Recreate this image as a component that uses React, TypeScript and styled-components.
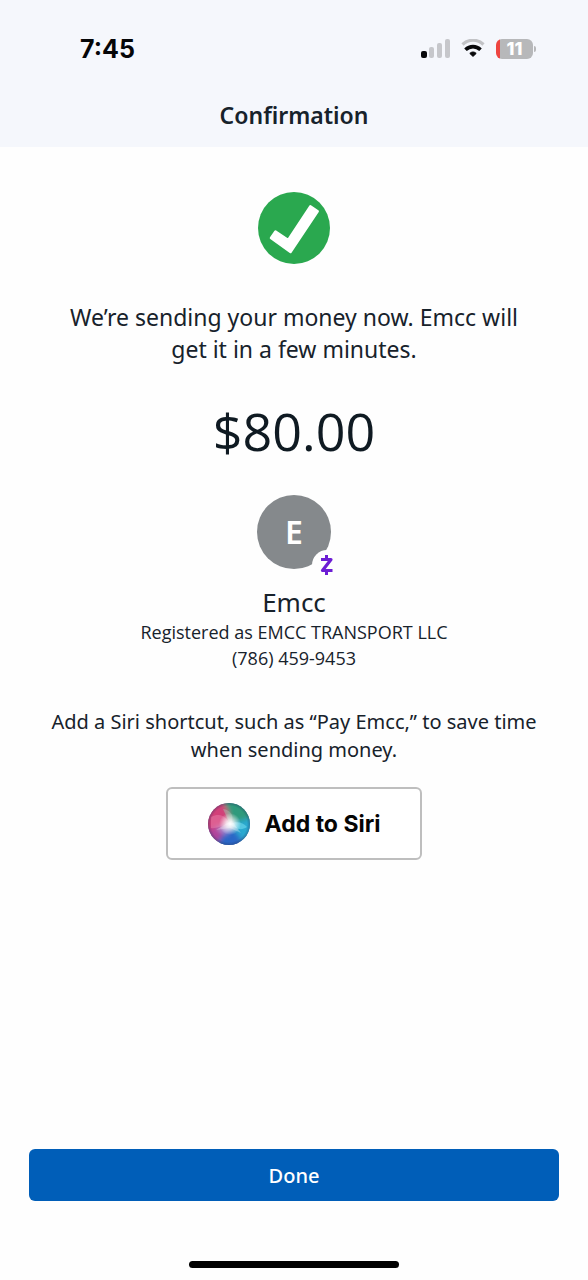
import React from "react";
import styled, { createGlobalStyle } from "styled-components";

const GlobalStyle = createGlobalStyle`
  *, *::before, *::after { box-sizing: border-box; }
  body {
    margin: 0;
    background: #fefefe;
    color: #17222b;
    font-family: "Noto Sans", "Open Sans", sans-serif;
  }
  h1, p { margin: 0; font-weight: 400; }
  button { font: inherit; cursor: pointer; }
`;

const Screen = styled.div`
  display: flex;
  flex-direction: column;
  min-height: 100vh;
`;

const Header = styled.header`
  background: #f5f7fc;
  padding-bottom: 14px;
`;

const StatusBar = styled.div`
  display: flex;
  align-items: center;
  justify-content: space-between;
  height: 97px;
  padding: 0 52px 0 80px;
`;

const Clock = styled.time`
  color: #050608;
  font: 700 25px/32px Inter, sans-serif;
`;

const StatusIcons = styled.div`
  display: flex;
  align-items: center;
  gap: 11px;
`;

const Battery = styled.div`
  display: flex;
  align-items: center;
  gap: 1px;
`;

const BatteryBody = styled.div`
  display: flex;
  align-items: center;
  justify-content: center;
  width: 37px;
  height: 20px;
  border-radius: 6px;
  background: linear-gradient(to right, #ee4540 4px, #b7b8ba 4px);
  color: #ffffff;
  font: 800 18px/20px Inter, sans-serif;
`;

const BatteryTip = styled.span`
  width: 2px;
  height: 6px;
  border-radius: 0 3px 3px 0;
  background: #b7b8ba;
`;

const Title = styled.h1`
  && { font-weight: 600; }
  font-size: 23px;
  line-height: 36px;
  text-align: center;
`;

const Content = styled.main`
  display: flex;
  flex-direction: column;
  align-items: center;
  padding: 45px 40px 32px;
  text-align: center;
`;

const Message = styled.p`
  max-width: 480px;
  margin-top: 37px;
  font-size: 23px;
  line-height: 32px;
`;

const Amount = styled.p`
  margin-top: 34px;
  color: #0f1a22;
  font-family: "Open Sans", sans-serif;
  font-size: 52px;
  line-height: 64px;
`;

const Avatar = styled.div`
  position: relative;
  display: flex;
  align-items: center;
  justify-content: center;
  width: 74px;
  height: 74px;
  margin-top: 32px;
  border-radius: 50%;
  background: #85898c;
  color: #ffffff;
  font-size: 32px;
  font-weight: 600;
  line-height: 40px;
`;

const ZelleBadge = styled.span`
  position: absolute;
  right: -11px;
  bottom: -11px;
  display: flex;
  align-items: center;
  justify-content: center;
  width: 30px;
  height: 30px;
  border-radius: 50%;
  background: #fefefe;
`;

const Name = styled.p`
  margin-top: 16px;
  font-size: 26px;
  line-height: 34px;
`;

const Detail = styled.p`
  font-family: "Open Sans", sans-serif;
  font-size: 18px;
  line-height: 26px;
`;

const Hint = styled.p`
  margin-top: 37px;
  font-size: 20px;
  line-height: 28px;
`;

const SiriButton = styled.button`
  display: flex;
  align-items: center;
  justify-content: center;
  gap: 15px;
  width: 256px;
  height: 73px;
  margin-top: 23px;
  border: 2px solid #bebebe;
  border-radius: 6px;
  background: #ffffff;
  color: #050505;
  && { font: 700 23px/28px Inter, sans-serif; }
`;

const Footer = styled.footer`
  display: flex;
  flex-direction: column;
  align-items: center;
  gap: 60px;
  margin-top: auto;
  padding: 0 29px 12px;
`;

const DoneButton = styled.button`
  width: 100%;
  height: 52px;
  border: 0;
  border-radius: 6px;
  background: #005eb8;
  color: #ffffff;
  && { font-size: 20px; font-weight: 500; }
`;

const HomeIndicator = styled.div`
  width: 210px;
  height: 7px;
  border-radius: 4px;
  background: #000000;
`;

const SignalIcon = () => (
  <svg width="30" height="20" viewBox="0 0 30 20" aria-hidden="true">
    <rect x="1" y="12" width="6" height="7" rx="2" fill="#08090b" />
    <rect x="9" y="8" width="5" height="11" rx="2" fill="#c6c7cb" />
    <rect x="17" y="4" width="5" height="15" rx="2" fill="#c6c7cb" />
    <rect x="25" y="0" width="5" height="19" rx="2" fill="#c6c7cb" />
  </svg>
);

const WifiIcon = () => (
  <svg width="24" height="20" viewBox="0 0 24 20" fill="none" aria-hidden="true">
    <path d="M1.5 5.5C7.400-.2 16.600-.2 22.500 5.500" stroke="#c2c3c6" strokeWidth="3.200" />
    <path d="M4.500 10.800C8.800 6.500 15.200 6.500 19.500 10.800" stroke="#08090b" strokeWidth="3.600" />
    <path d="M8.800 14.400c2-1.900 4.400-1.900 6.400 0L12 17.400Z" fill="#08090b" stroke="#08090b" strokeLinejoin="round" />
  </svg>
);

const SuccessIcon = () => (
  <svg width="72" height="72" viewBox="0 0 72 72" role="img" aria-label="Success">
    <circle cx="36" cy="36" r="36" fill="#2aa84f" />
    <path
      d="M13 46 17.500 39.500 30.200 48 52.300 14.400 59.700 19.200 32.500 60Z"
      fill="#ffffff"
      stroke="#ffffff"
      strokeWidth="2.500"
      strokeLinejoin="round"
    />
  </svg>
);

const ZelleIcon = () => (
  <svg width="14" height="24" viewBox="0 0 14 24" fill="none" stroke="#6d1ed4" aria-hidden="true">
    <path d="M1 6.500h10L2.500 17.500h10" strokeWidth="3.200" strokeLinejoin="round" />
    <path d="M6.500 2v4M6.500 18v4" strokeWidth="3" />
  </svg>
);

const SiriIcon = () => (
  <svg width="42" height="42" viewBox="0 0 42 42" aria-hidden="true">
    <defs>
      <clipPath id="orb"><circle cx="21" cy="21" r="21" /></clipPath>
      <filter id="soft" x="-30%" y="-30%" width="160%" height="160%">
        <feGaussianBlur stdDeviation="2.500" />
      </filter>
      <radialGradient id="glow">
        <stop offset="0" stopColor="#ffffff" />
        <stop offset="0.350" stopColor="#ffffff" stopOpacity="0.750" />
        <stop offset="1" stopColor="#ffffff" stopOpacity="0" />
      </radialGradient>
      <radialGradient id="rim">
        <stop offset="0.850" stopColor="#20305a" stopOpacity="0" />
        <stop offset="1" stopColor="#20305a" stopOpacity="0.350" />
      </radialGradient>
    </defs>
    <g clipPath="url(#orb)">
      <rect width="42" height="42" fill="#5c6f9c" />
      <g filter="url(#soft)">
        <path d="M14-4H46V18L22 21Z" fill="#2f9a7c" />
        <path d="M-4 4 14-4 20 8 22 21-4 32Z" fill="#d23f79" />
        <path d="M-4 27 21 23 8 42Z" fill="#b0409a" />
        <path d="M5 46 20 24 38 34 31 46Z" fill="#2b66c6" />
        <path d="M22 21 46 14V31L35 39Z" fill="#2ba9d0" />
        <path d="M7 25 21 22 19 32Z" fill="#a58fd6" />
      </g>
      <path d="M3 14C13 9 18 14 22 21 13 23 7 26 3 25Z" fill="#f49ac1" opacity="0.350" />
      <path d="M15 6C22 7 28 13 22 21Z" fill="#a3dfc9" opacity="0.350" />
      <path d="M22 21C28 18 35 19 39 24 33 28 28 26 22 21Z" fill="#7de3f4" opacity="0.500" />
      <circle cx="22" cy="21" r="11" fill="url(#glow)" />
      <path d="M21 19 24 18 33 30 22 25 8 27Z" fill="#ffffff" opacity="0.250" />
      <circle cx="21" cy="21" r="21" fill="url(#rim)" />
    </g>
  </svg>
);

export default function App() {
  return (
    <Screen>
      <GlobalStyle />
      <Header>
        <StatusBar>
          <Clock>7:45</Clock>
          <StatusIcons>
            <SignalIcon />
            <WifiIcon />
            <Battery>
              <BatteryBody>11</BatteryBody>
              <BatteryTip />
            </Battery>
          </StatusIcons>
        </StatusBar>
        <Title>Confirmation</Title>
      </Header>
      <Content>
        <SuccessIcon />
        <Message>We’re sending your money now. Emcc will get it in a few minutes.</Message>
        <Amount>$80.00</Amount>
        <Avatar>
          E
          <ZelleBadge>
            <ZelleIcon />
          </ZelleBadge>
        </Avatar>
        <Name>Emcc</Name>
        <Detail>Registered as EMCC TRANSPORT LLC</Detail>
        <Detail>(786) 459-9453</Detail>
        <Hint>Add a Siri shortcut, such as “Pay Emcc,” to save time when sending money.</Hint>
        <SiriButton type="button">
          <SiriIcon />
          Add to Siri
        </SiriButton>
      </Content>
      <Footer>
        <DoneButton type="button">Done</DoneButton>
        <HomeIndicator />
      </Footer>
    </Screen>
  );
}
